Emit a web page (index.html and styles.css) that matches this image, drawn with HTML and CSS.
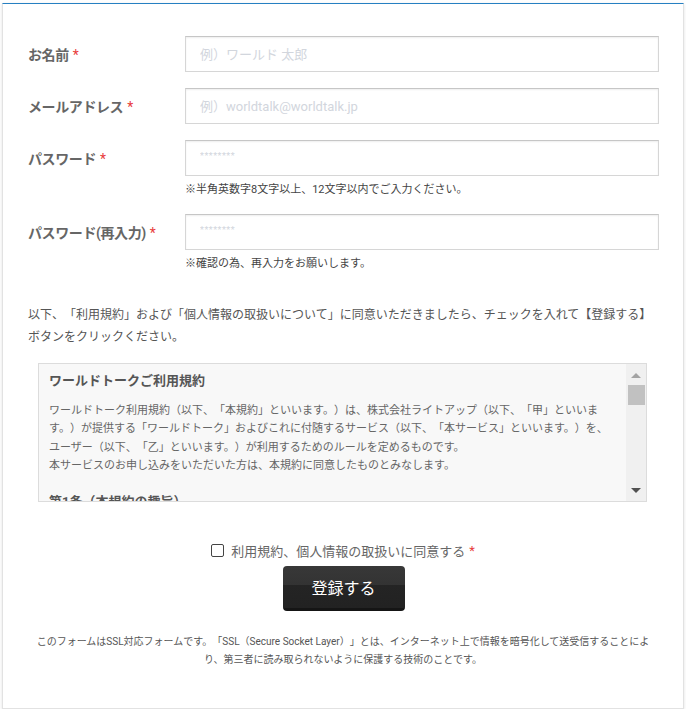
FILE: index.html
```html
<!DOCTYPE html>
<html lang="ja">
<head>
    <meta charset="UTF-8">
    <meta name="viewport" content="width=device-width, initial-scale=1.0">
    <title>会員登録</title>
    <link rel="stylesheet" href="styles.css">
</head>
<body>
    <div class="page">
        <form class="form">
            <div class="row">
                <label class="label">お名前<span class="req">*</span></label>
                <input type="text" class="input-field" placeholder="例）ワールド 太郎">
            </div>
            <div class="row">
                <label class="label">メールアドレス<span class="req">*</span></label>
                <input type="email" class="input-field" placeholder="例）worldtalk@worldtalk.jp">
            </div>
            <div class="row has-note">
                <label class="label">パスワード<span class="req">*</span></label>
                <input type="text" class="input-field pass" placeholder="********">
                <p class="note">※半角英数字8文字以上、12文字以内でご入力ください。</p>
            </div>
            <div class="row has-note">
                <label class="label">パスワード(再入力)<span class="req">*</span></label>
                <input type="text" class="input-field pass" placeholder="********">
                <p class="note">※確認の為、再入力をお願いします。</p>
            </div>

            <p class="lead">以下、「利用規約」および「個人情報の取扱いについて」に同意いただきましたら、チェックを入れて【登録する】ボタンをクリックください。</p>

            <div class="terms">
                <div class="terms-body">
                    <h3>ワールドトークご利用規約</h3>
                    <p>ワールドトーク利用規約（以下、「本規約」といいます。）は、株式会社ライトアップ（以下、「甲」といいます。）が提供する「ワールドトーク」およびこれに付随するサービス（以下、「本サービス」といいます。）を、ユーザー（以下、「乙」といいます。）が利用するためのルールを定めるものです。<br>本サービスのお申し込みをいただいた方は、本規約に同意したものとみなします。</p>
                    <h3>第1条（本規約の趣旨）</h3>
                    <p>本規約は、本サービスの利用に関して甲と乙との間に適用されるものとし、乙は本規約に従って本サービスを利用するものとします。</p>
                </div>
                <!-- スクロールバー -->
                <div class="scrollbar">
                    <span class="arrow up"></span>
                    <span class="thumb"></span>
                    <span class="track"></span>
                    <span class="arrow down"></span>
                </div>
            </div>

            <div class="agree">
                <label><input type="checkbox" class="check">利用規約、個人情報の取扱いに同意する<span class="req">*</span></label>
            </div>
            <div class="submit">
                <button type="button" class="btn">登録する</button>
            </div>

            <p class="ssl">このフォームはSSL対応フォームです。「SSL（Secure Socket Layer）」とは、インターネット上で情報を暗号化して送受信することにより、第三者に読み取られないように保護する技術のことです。</p>
        </form>
    </div>
</body>
</html>
```

FILE: styles.css
```css
body {
    font-family: Roboto, "Noto Sans CJK JP", sans-serif;
    text-spacing-trim: space-all;
    margin: 0;
    padding: 0;
    background-color: #fff;
    color: #555;
}
.page {
    margin: 3px 2px 0;
    height: 706px;
    box-sizing: border-box;
    border: 1px solid #e2e2e2;
    border-top: 1px solid #2680c2;
    box-shadow: 0 1px 3px rgba(0, 0, 0, 0.12);
    padding: 32px 25px 0;
}
.row {
    display: grid;
    grid-template-columns: 157px 1fr;
    align-items: center;
    margin-bottom: 16px;
}
.row.has-note {
    margin-bottom: 17px;
}
.label {
    font-size: 14px;
    font-weight: bold;
    color: #666;
    letter-spacing: -0.4px;
}
.req {
    color: #e83b3b;
    font-weight: normal;
    margin-left: 4px;
}
.input-field {
    height: 36px;
    box-sizing: border-box;
    border: 1px solid #d6d6d6;
    border-top-color: #c6c6c6;
    box-shadow: inset 0 1px 2px rgba(0, 0, 0, 0.07);
    padding: 0 14px;
    font-family: inherit;
    font-size: 13px;
    color: #444;
    margin: 0 -1px 0 0;
}
.input-field::placeholder {
    color: #d2d6dd;
}
.pass::placeholder {
    font-size: 9px;
    letter-spacing: 0.5px;
}
.pass {
    padding-bottom: 8px;
}
.note {
    grid-column: 2;
    margin: 7px 0 0;
    font-size: 11px;
    line-height: 14px;
    color: #444;
}
.lead {
    margin: 33px 0 15px;
    font-size: 12px;
    line-height: 22px;
    color: #555;
}
.terms {
    display: flex;
    margin: 0 11px 0 10px;
    height: 139px;
    box-sizing: border-box;
    background-color: #f8f8f8;
    border: 1px solid #dcdcdc;
    color: #666;
}
.terms-body {
    flex: 1;
    overflow: hidden;
    padding: 7px 11px 0 10px;
}
.terms h3 {
    margin: 0 0 11px;
    font-size: 13px;
    line-height: 20px;
    color: #555;
}
.terms p {
    margin: 0 0 16px;
    font-size: 11px;
    line-height: 18.4px;
}
.scrollbar {
    width: 20px;
    background: #f0f0f0;
    display: flex;
    flex-direction: column;
    align-items: center;
}
.arrow {
    height: 20px;
    width: 0;
    display: flex;
    align-items: center;
}
.arrow::before {
    content: "";
    border-left: 5px solid transparent;
    border-right: 5px solid transparent;
    margin-left: -5px;
}
.arrow.up::before {
    border-bottom: 5px solid #a3a3a3;
    margin-top: 2px;
}
.arrow.down::before {
    border-top: 5px solid #505050;
    margin-top: -2px;
}
.thumb {
    width: 17px;
    height: 20px;
    background: #c1c1c1;
    margin-top: 1px;
}
.track {
    flex: 1;
}
.agree {
    text-align: center;
    margin-top: 39px;
    font-size: 13px;
    color: #666;
}
.agree label {
    display: inline-flex;
    align-items: center;
}
.check {
    appearance: none;
    width: 13px;
    height: 13px;
    border: 1px solid #444;
    border-radius: 2px;
    background: #fff;
    margin: 0 7px 0 0;
}
.submit {
    text-align: center;
    margin-top: 6px;
}
.btn {
    width: 122px;
    height: 45px;
    font-family: inherit;
    font-size: 16px;
    color: #fff;
    border: none;
    border-bottom: 3px solid #151515;
    border-radius: 4px;
    background: linear-gradient(#383838 0%, #333 46%, #242424 46%, #222 100%);
    cursor: pointer;
    margin-left: 1px;
}
.ssl {
    margin: 22px 0 0;
    font-size: 10px;
    line-height: 18px;
    text-align: center;
    color: #555;
}
```
